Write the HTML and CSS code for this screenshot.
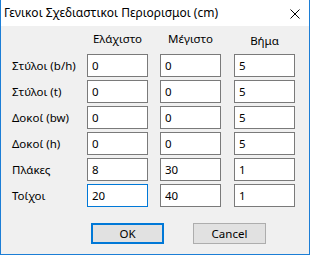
FILE: index.html
```html
<!DOCTYPE html>
<html lang="el">
<head>
<meta charset="utf-8">
<link rel="stylesheet" href="styles.css">
</head>
<body>
<div class="window">
  <div class="titlebar">
    <span class="title">Γενικοι Σχεδιαστικοι Περιορισμοι (cm)</span>
    <svg class="close" width="10" height="10" viewBox="0 0 10 10"><path d="M0.5 0.5 L9.5 9.5 M9.5 0.5 L0.5 9.5" stroke="#000" stroke-width="1" fill="none"/></svg>
  </div>
  <div class="content">
    <div class="grid">
      <span></span>
      <span class="head">Ελάχιστο</span>
      <span class="head">Μέγιστο</span>
      <span class="head head-low">Βήμα</span>

      <span class="label">Στύλοι (b/h)</span>
      <input class="field" value="0"><input class="field" value="0"><input class="field" value="5">

      <span class="label">Στύλοι (t)</span>
      <input class="field" value="0"><input class="field" value="0"><input class="field" value="5">

      <span class="label">Δοκοί (bw)</span>
      <input class="field" value="0"><input class="field" value="0"><input class="field" value="5">

      <span class="label">Δοκοί (h)</span>
      <input class="field" value="0"><input class="field" value="0"><input class="field" value="5">

      <span class="label">Πλάκες</span>
      <input class="field" value="8"><input class="field" value="30"><input class="field" value="1">

      <span class="label">Τοίχοι</span>
      <input class="field focused" value="20"><input class="field" value="40"><input class="field" value="1">
    </div>
    <div class="buttons">
      <button class="btn btn-default">OK</button>
      <button class="btn">Cancel</button>
    </div>
  </div>
</div>
</body>
</html>
```

FILE: styles.css
```css
html, body {
  margin: 0;
  padding: 0;
  background: #f0f0f0;
}
.window {
  width: 310px;
  height: 255px;
  box-sizing: border-box;
  border: 1px solid #1c7ed6;
  border-top: none;
  background: #f0f0f0;
  font-family: "Noto Sans", "Open Sans", sans-serif;
  font-size: 11.5px;
  color: #000;
  display: flex;
  flex-direction: column;
}
.titlebar {
  height: 26px;
  background: #fff;
  display: flex;
  align-items: center;
  justify-content: space-between;
  padding: 0 9px 0 3px;
}
.title {
  font-size: 12px;
  line-height: 16px;
}
.close {
  display: block;
  margin-top: 1px;
}
.content {
  padding: 4px 0 0 11px;
}
.grid {
  display: grid;
  grid-template-columns: 75px 73px 74px 61px;
  grid-template-rows: 21px repeat(6, 23px);
  row-gap: 3px;
  align-items: center;
}
.grid > .head {
  margin-bottom: 4px;
}
.head {
  width: 61px;
  text-align: center;
  line-height: 16px;
}
.head-low {
  position: relative;
  top: 2px;
}
.label {
  line-height: 16px;
}
.field {
  width: 61px;
  height: 23px;
  box-sizing: border-box;
  border: 1px solid #7a7a7a;
  background: #fff;
  margin: 0;
  padding: 0 0 0 4px;
  font-family: inherit;
  font-size: 11.5px;
  color: #000;
  outline: none;
}
.field.focused {
  border-color: #0078d7;
}
.buttons {
  display: flex;
  gap: 29px;
  padding-left: 79px;
  margin-top: 16px;
}
.btn {
  width: 73px;
  height: 21px;
  box-sizing: border-box;
  border: 1px solid #adadad;
  background: #e1e1e1;
  font-family: inherit;
  font-size: 11.5px;
  color: #000;
  margin: 0;
  padding: 0;
}
.btn-default {
  border: 2px solid #0078d7;
}
```
